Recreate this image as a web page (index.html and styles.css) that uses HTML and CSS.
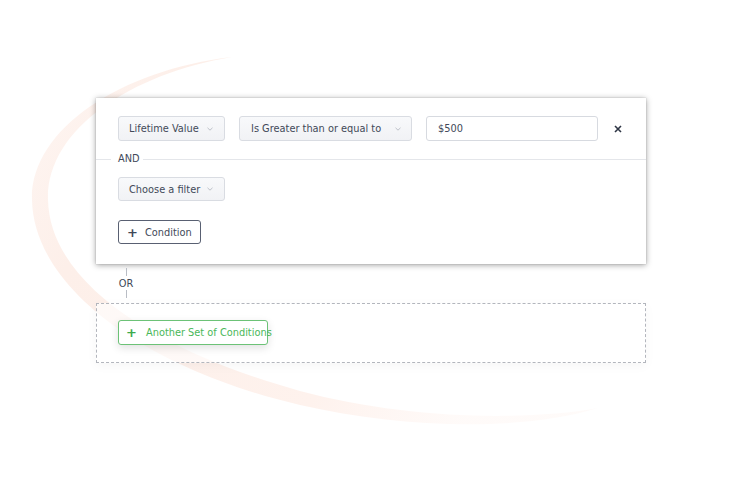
FILE: index.html
```html
<!DOCTYPE html>
<html lang="en">
<head>
<meta charset="utf-8">
<title>Condition builder</title>
<link rel="stylesheet" href="styles.css">
</head>
<body>
<div class="stage">
  <svg class="bg-arc" width="752" height="477" viewBox="0 0 752 477" aria-hidden="true">
    <defs>
      <linearGradient id="arcGrad" x1="0" y1="0" x2="1" y2="0.4">
        <stop offset="0" stop-color="#fdeee8" stop-opacity="0.5"/>
        <stop offset="0.25" stop-color="#fdefe9" stop-opacity="1"/>
        <stop offset="0.75" stop-color="#fef2ed" stop-opacity="1"/>
        <stop offset="1" stop-color="#fef4f0" stop-opacity="0.4"/>
      </linearGradient>
    </defs>
    <path fill="url(#arcGrad)" d="M232,57 C120,70 30,130 32,200 C34,290 150,370 300,405 C400,428 520,432 598,408 C520,422 400,418 300,391 C160,352 50,285 48,200 C46,130 130,74 232,57 Z"/>
  </svg>

  <div class="builder">
    <section class="group-card">
      <div class="row">
        <div class="select select-field">
          <span>Lifetime Value</span>
          <svg class="chev" width="6" height="4" viewBox="0 0 6 4"><polyline points="0.5,0.8 3,3.2 5.5,0.8"/></svg>
        </div>
        <div class="select select-op">
          <span>Is Greater than or equal to</span>
          <svg class="chev" width="6" height="4" viewBox="0 0 6 4"><polyline points="0.5,0.8 3,3.2 5.5,0.8"/></svg>
        </div>
        <div class="value-input">$500</div>
        <button class="remove" type="button" aria-label="Remove">
          <svg width="8" height="8" viewBox="0 0 8 8"><path d="M1,1 L7,7 M7,1 L1,7"/></svg>
        </button>
      </div>

      <div class="and-divider"><span>AND</span></div>

      <div class="row row-filter">
        <div class="select select-field">
          <span>Choose a filter</span>
          <svg class="chev" width="6" height="4" viewBox="0 0 6 4"><polyline points="0.5,0.8 3,3.2 5.5,0.8"/></svg>
        </div>
      </div>

      <div class="row row-add">
        <button class="btn-condition" type="button"><span class="plus">+</span>Condition</button>
      </div>
    </section>

    <div class="or-connector">
      <span class="tick"></span>
      <span class="or-label">OR</span>
      <span class="tick"></span>
    </div>

    <section class="dashed-box">
      <button class="btn-another" type="button"><span class="plus">+</span>Another Set of Conditions</button>
    </section>
  </div>
</div>
</body>
</html>
```

FILE: styles.css
```css
* {
  box-sizing: border-box;
}

html, body {
  margin: 0;
  padding: 0;
  background: #ffffff;
}

body {
  font-family: "DejaVu Sans", "Liberation Sans", sans-serif;
  font-size: 9.8px;
  color: #424959;
}

.stage {
  position: relative;
  width: 752px;
  height: 477px;
  overflow: hidden;
}

.bg-arc {
  position: absolute;
  left: 0;
  top: 0;
  z-index: 0;
}

.builder {
  position: relative;
  z-index: 1;
  width: 550px;
  margin-left: 96px;
  padding-top: 98px;
}

.group-card {
  background: #ffffff;
  box-shadow: 0 1px 6px rgba(0, 0, 0, 0.38), 0 0 1px rgba(0, 0, 0, 0.25);
  padding: 18px 0 20px;
}

.row {
  display: flex;
  align-items: center;
  padding: 0 22px;
}

.select {
  display: flex;
  align-items: center;
  justify-content: space-between;
  height: 25px;
  padding: 0 11px 0 10px;
  background: linear-gradient(#f8f9fb, #f1f2f5);
  border: 1px solid #d9dce2;
  border-radius: 3px;
  white-space: nowrap;
}

.select-field {
  width: 107px;
}

.select-op {
  width: 173px;
  margin-left: 14px;
  padding-left: 11px;
  padding-right: 10px;
}

.chev {
  flex: none;
}

.chev polyline {
  fill: none;
  stroke: #b6bac3;
  stroke-width: 0.9;
}

.value-input {
  width: 172px;
  height: 25px;
  margin-left: 14px;
  padding: 0 11px;
  display: flex;
  align-items: center;
  border: 1px solid #d7dae0;
  border-radius: 3px;
  background: #ffffff;
}

.remove {
  margin-left: 16px;
  width: 8px;
  height: 8px;
  padding: 0;
  border: 0;
  background: none;
  display: flex;
}

.remove path {
  stroke: #2f3645;
  stroke-width: 1.6;
  fill: none;
}

.and-divider {
  display: flex;
  align-items: center;
  height: 12px;
  margin-top: 12px;
  line-height: 12px;
}

.and-divider::before {
  content: "";
  width: 15px;
  height: 1px;
  background: #e4e6ea;
}

.and-divider span {
  margin: 0 3px 0 7px;
}

.and-divider::after {
  content: "";
  flex: 1;
  height: 1px;
  background: #e4e6ea;
}

.row-filter {
  margin-top: 12px;
}

.row-filter .select {
  height: 24px;
  width: 107px;
}

.row-add {
  margin-top: 19px;
}

.btn-condition {
  display: flex;
  align-items: center;
  width: 83px;
  height: 24px;
  padding: 0 0 0 8px;
  background: #ffffff;
  border: 1px solid #596072;
  border-radius: 3px;
  font-family: inherit;
  font-size: 9.8px;
  color: #424959;
}

.plus {
  flex: none;
  font-size: 13px;
  font-weight: bold;
  line-height: 1;
  width: 18px;
  text-align: left;
}

.or-connector {
  display: flex;
  flex-direction: column;
  align-items: center;
  width: 16px;
  margin-left: 22px;
  padding: 4px 0 5px;
}

.tick {
  width: 1px;
  height: 8px;
  background: #b9bdc5;
}

.or-label {
  height: 14px;
  line-height: 15px;
  color: #424959;
}

.dashed-box {
  height: 60px;
  border: 1px dashed #b3b6bd;
  box-shadow: 0 3px 10px rgba(0, 0, 0, 0.04);
  padding: 16px 0 0 21px;
  background: rgba(255, 255, 255, 0.6);
}

.btn-another {
  display: flex;
  align-items: center;
  width: 150px;
  height: 25px;
  padding: 0 0 0 7px;
  background: #ffffff;
  border: 1px solid #6cc277;
  border-radius: 3px;
  box-shadow: 0 3px 8px rgba(0, 0, 0, 0.12);
  font-family: inherit;
  font-size: 9.8px;
  color: #4ab759;
  white-space: nowrap;
  overflow: visible;
}

.btn-another .plus {
  width: 20px;
  color: #3daa4c;
}
```
